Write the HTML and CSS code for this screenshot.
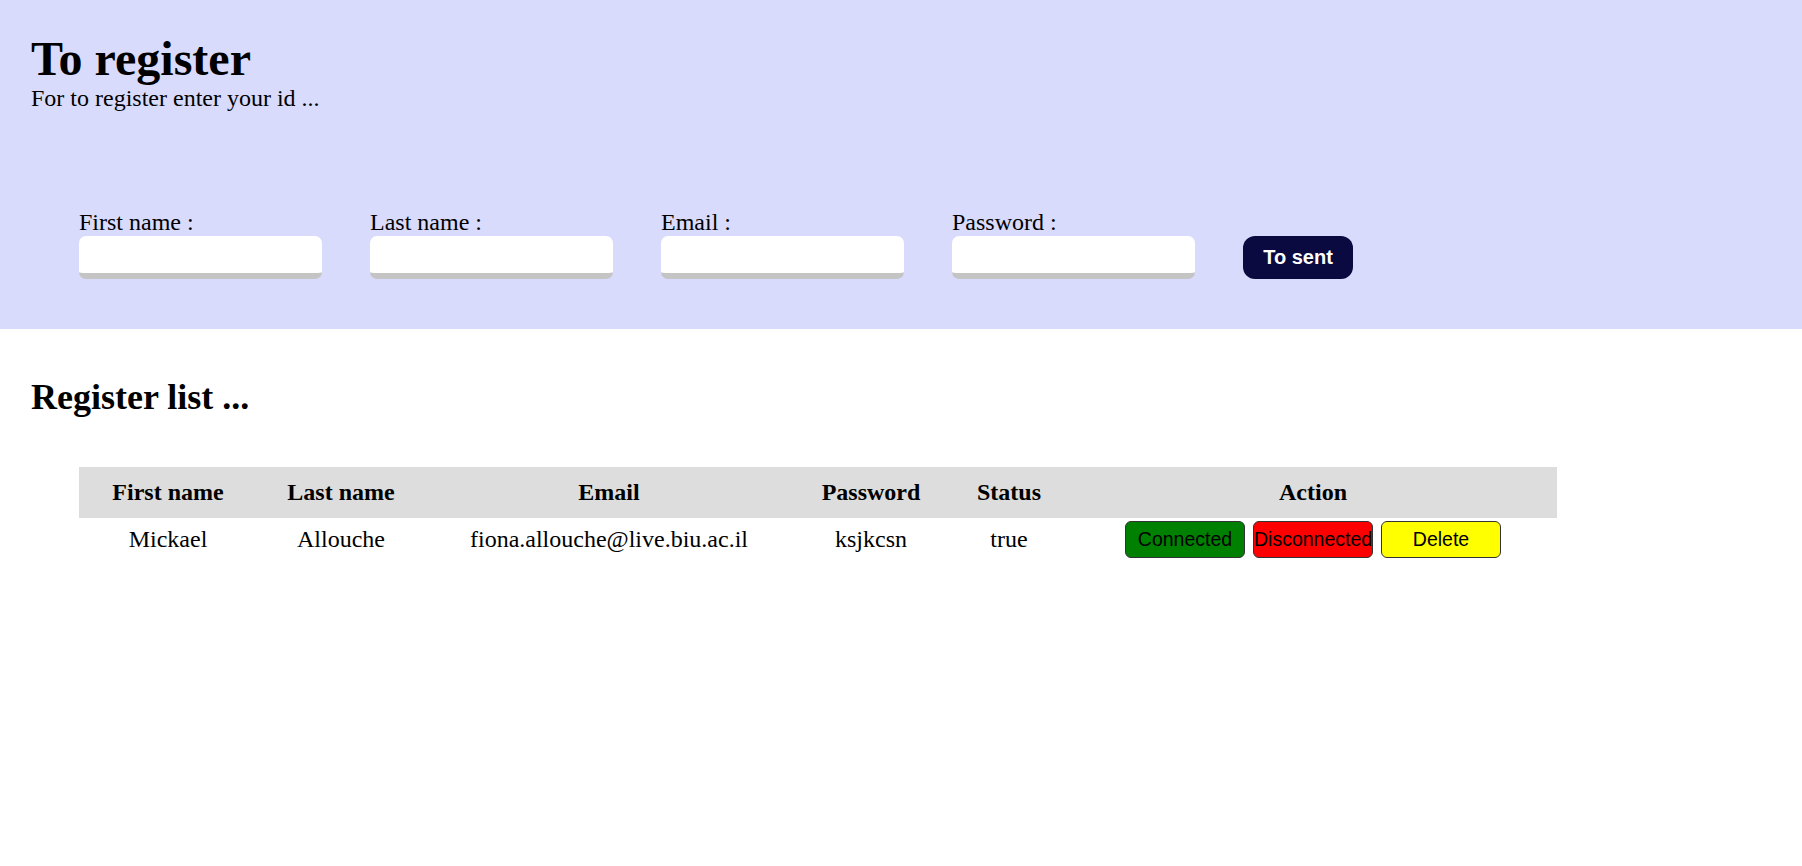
FILE: index.html
```html
<!DOCTYPE html>
<html lang="en">
<head>
<meta charset="utf-8">
<title>To register</title>
<link rel="stylesheet" href="styles.css">
</head>
<body>
<header class="hero">
  <h1 class="hero-title">To register</h1>
  <p class="hero-sub">For to register enter your id ...</p>
  <form class="reg-form">
    <div class="field">
      <label class="field-label" for="fn">First name :</label>
      <input class="field-input" id="fn" type="text">
    </div>
    <div class="field">
      <label class="field-label" for="ln">Last name :</label>
      <input class="field-input" id="ln" type="text">
    </div>
    <div class="field">
      <label class="field-label" for="em">Email :</label>
      <input class="field-input" id="em" type="text">
    </div>
    <div class="field">
      <label class="field-label" for="pw">Password :</label>
      <input class="field-input" id="pw" type="password">
    </div>
    <button class="send-btn" type="button">To sent</button>
  </form>
</header>
<main class="list">
  <h2 class="list-title">Register list ...</h2>
  <table class="reg-table">
    <colgroup>
      <col class="c1"><col class="c2"><col class="c3"><col class="c4"><col class="c5"><col class="c6">
    </colgroup>
    <thead>
      <tr>
        <th>First name</th>
        <th>Last name</th>
        <th>Email</th>
        <th>Password</th>
        <th>Status</th>
        <th>Action</th>
      </tr>
    </thead>
    <tbody>
      <tr>
        <td>Mickael</td>
        <td>Allouche</td>
        <td>fiona.allouche@live.biu.ac.il</td>
        <td>ksjkcsn</td>
        <td>true</td>
        <td>
          <div class="actions">
            <button class="act act-green" type="button">Connected</button>
            <button class="act act-red" type="button">Disconnected</button>
            <button class="act act-yellow" type="button">Delete</button>
          </div>
        </td>
      </tr>
    </tbody>
  </table>
</main>
</body>
</html>
```
FILE: styles.css
```css
* { box-sizing: border-box; }

body {
  margin: 0;
  font-family: "Liberation Serif", "Times New Roman", serif;
  font-size: 24px;
  color: #000;
  background: #fff;
}

.hero {
  background: #d9dbfd;
  padding: 33px 31px 50px;
}

.hero-title {
  margin: 0;
  font-size: 48px;
  line-height: 51px;
  font-weight: bold;
}

.hero-sub {
  margin: 0;
  font-size: 24px;
  line-height: 28px;
}

.reg-form {
  margin: 96px 0 0 48px;
  display: flex;
  align-items: flex-end;
  gap: 48px;
}

.field {
  display: flex;
  flex-direction: column;
  width: 243px;
}

.field-label {
  font-size: 24px;
  line-height: 28px;
}

.field-input {
  height: 43px;
  border: none;
  border-bottom: 6px solid #c4c4c4;
  border-radius: 7px;
  background: #fff;
  padding: 0 10px;
  font-size: 20px;
  outline: none;
}

.send-btn {
  width: 110px;
  height: 43px;
  border: none;
  border-radius: 12px;
  background: #0b0a40;
  color: #fff;
  font-family: "Liberation Sans", Arial, sans-serif;
  font-weight: bold;
  font-size: 20px;
  padding: 0;
}

.list {
  padding: 48px 31px 0;
}

.list-title {
  margin: 0;
  font-size: 36px;
  line-height: 41px;
  font-weight: bold;
}

.reg-table {
  margin: 49px 0 0 48px;
  width: 1478px;
  table-layout: fixed;
  border-collapse: collapse;
}

.c1 { width: 178px; }
.c2 { width: 168px; }
.c3 { width: 368px; }
.c4 { width: 156px; }
.c5 { width: 120px; }
.c6 { width: 488px; }

.reg-table thead tr {
  background: #dddddd;
}

.reg-table th {
  height: 51px;
  padding: 0;
  font-size: 24px;
  font-weight: bold;
  text-align: center;
  vertical-align: middle;
}

.reg-table td {
  height: 43px;
  padding: 3px 0;
  font-size: 24px;
  text-align: center;
  vertical-align: middle;
}

.actions {
  display: flex;
  justify-content: center;
  gap: 8px;
}

.act {
  width: 120px;
  height: 37px;
  padding: 0;
  border: 1px solid #333;
  border-radius: 6px;
  color: #000;
  font-family: "Liberation Sans", Arial, sans-serif;
  font-size: 19.5px;
  white-space: nowrap;
}

.act-green { background: #008000; }
.act-red { background: #ff0000; }
.act-yellow { background: #ffff00; }
```
